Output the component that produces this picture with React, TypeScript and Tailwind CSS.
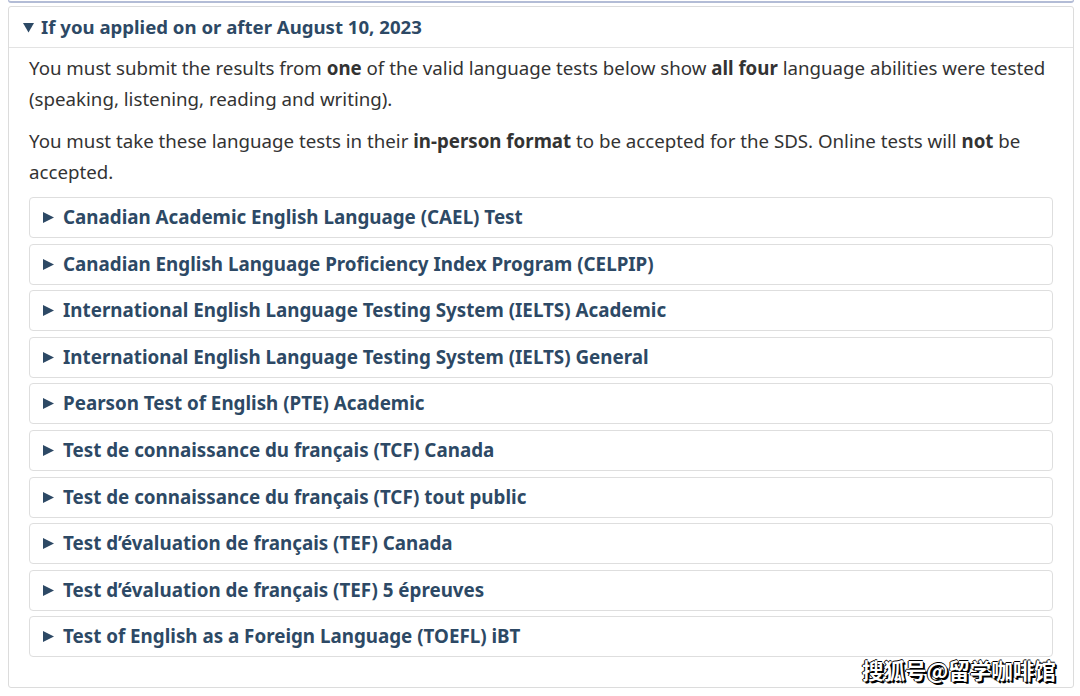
import React from 'react';

const tests = [
  'Canadian Academic English Language (CAEL) Test',
  'Canadian English Language Proficiency Index Program (CELPIP)',
  'International English Language Testing System (IELTS) Academic',
  'International English Language Testing System (IELTS) General',
  'Pearson Test of English (PTE) Academic',
  'Test de connaissance du français (TCF) Canada',
  'Test de connaissance du français (TCF) tout public',
  'Test d’évaluation de français (TEF) Canada',
  'Test d’évaluation de français (TEF) 5 épreuves',
  'Test of English as a Foreign Language (TOEFL) iBT',
];

const Caret = ({ open }: { open?: boolean }) => (
  <svg viewBox="0 0 10 10" className="w-[11px] h-[11px] shrink-0 fill-[#2d4965]">
    {open ? <path d="M0 1 L10 1 L5 9.5 Z" /> : <path d="M0 0 L10 5 L0 10 Z" />}
  </svg>
);

export default function App() {
  return (
    <div className="relative w-[1080px] h-[696px] bg-white font-['Noto_Sans',sans-serif] text-[#333]">
      <div className="mx-[8px] w-[1066px] h-[3px] border-b-2 border-x border-[#b3bcd6] rounded-b-[3px]" />
      <div className="mx-[8px] mt-[3px] w-[1066px] h-[682px] border border-[#dcdcdc] rounded-[3px]">
        <div className="h-[41px] flex items-center gap-[7px] pl-[14px] border-b border-[#e3e3e3] text-[#2d4965] font-bold text-[18.6px]">
          <Caret open />
          <span>If you applied on or after August 10, 2023</span>
        </div>
        <div className="px-[20px] pt-[4px] text-[18.7px] leading-[31px]">
          <p>
            You must submit the results from <b>one</b> of the valid language tests below show <b>all four</b> language abilities were tested (speaking, listening, reading and writing).
          </p>
          <p className="mt-[11px]">
            You must take these language tests in their <b>in-person format</b> to be accepted for the SDS. Online tests will <b>not</b> be accepted.
          </p>
          <div className="mt-[10px] flex flex-col gap-[5.6px]">
            {tests.map((t) => (
              <div key={t} className="h-[41px] flex items-center gap-[9px] pl-[13px] border border-[#dedede] rounded-[4px] text-[#2d4965] font-bold text-[18.8px]">
                <Caret />
                <span>{t}</span>
              </div>
            ))}
          </div>
        </div>
      </div>
      <div className="absolute left-[862px] top-[654px] text-white text-[21.5px] font-bold font-['Noto_Sans_CJK_SC',sans-serif] [text-shadow:1px_1px_0_#000,-1px_0_0_#000,0_-1px_0_#000,2px_2px_0_#000]">
        搜狐号@留学咖啡馆
      </div>
    </div>
  );
}
